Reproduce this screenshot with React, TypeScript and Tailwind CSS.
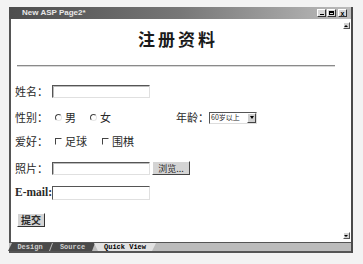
import React from "react";

const cjk = "font-['Noto_Sans_CJK_SC','Noto_Sans',sans-serif]";

function Radio() {
  return (
    <span className="inline-block w-[7px] h-[7px] rounded-full border border-t-[#444] border-l-[#444] border-r-[#e6e6e6] border-b-[#e6e6e6] mr-[3px]" />
  );
}

function Check() {
  return (
    <span className="inline-block w-[7px] h-[7px] border border-t-[#444] border-l-[#444] border-r-white border-b-white mr-[3px]" />
  );
}

function TextInput({ w }: { w: string }) {
  return (
    <div
      className={`${w} h-[13px] bg-white border border-t-[#555] border-l-[#555] border-r-[#e0e0e0] border-b-[#e0e0e0] shadow-[inset_1px_1px_0_#bbb]`}
    />
  );
}

export default function App() {
  return (
    <div className="w-[363px] h-[264px] bg-[#f3f3f3] overflow-hidden">
      <div className="ml-[9px] mt-[7px] w-[344px] h-[246px] flex flex-col border-r-2 border-[#4a4a4a]">
        {/* title bar */}
        <div className="h-[12px] flex items-center bg-gradient-to-r from-[#4d4d4d] via-[#777] to-[#bdbdbd] pl-[13px] pr-[4px]">
          <span className="text-[8px] leading-none font-bold text-[#e8e8e8] font-['Liberation_Sans',sans-serif]">
            New ASP Page2*
          </span>
          <div className="ml-auto flex gap-[1px]">
            <div className="w-[9px] h-[8px] bg-[#d8d8d8] border border-t-white border-l-white border-r-[#333] border-b-[#333] flex items-end justify-center pb-[1px]">
              <div className="w-[4px] h-[1px] bg-black" />
            </div>
            <div className="w-[9px] h-[8px] bg-[#d8d8d8] border border-t-white border-l-white border-r-[#333] border-b-[#333] flex items-center justify-center">
              <div className="w-[5px] h-[4px] border border-black border-t-2" />
            </div>
            <div className="w-[9px] h-[8px] ml-[1px] bg-[#d8d8d8] border border-t-white border-l-white border-r-[#333] border-b-[#333] flex items-center justify-center text-[7px] leading-none font-bold font-['Liberation_Sans',sans-serif]">
              x
            </div>
          </div>
        </div>
        {/* body */}
        <div className="flex-1 flex bg-white">
          <div className="flex-1 border-l-2 border-[#555] flex flex-col pl-[4px] text-[#2a2a2a]">
            <div className={`mt-[10px] text-center text-[17px] leading-[20px] font-bold tracking-[3px] text-[#1a1a1a] ${cjk}`}>
              注册资料
            </div>
            <div className="mt-[16px] ml-[2px] w-[318px] h-[2px] border-t border-[#8a8a8a] border-b border-b-[#d8d8d8]" />

            {/* 姓名 */}
            <div className={`mt-[18px] h-[13px] flex items-center text-[11px] ${cjk}`}>
              <span className="w-[37px]">姓名：</span>
              <TextInput w="w-[98px]" />
            </div>

            {/* 性别 / 年龄 */}
            <div className={`mt-[13px] h-[13px] flex items-center text-[11px] ${cjk}`}>
              <span className="w-[40px]">性别：</span>
              <Radio />
              <span className="w-[25px]">男</span>
              <Radio />
              <span className="w-[76px]">女</span>
              <span className="w-[33px]">年龄：</span>
              <div className="w-[48px] h-[12px] flex items-center bg-white border border-t-[#555] border-l-[#555] border-r-[#ddd] border-b-[#ddd]">
                <span className="flex-1 whitespace-nowrap text-[7px] leading-none pl-[1px]">60岁以上</span>
                <div className="w-[9px] h-[10px] shrink-0 bg-[#d0d0d0] border border-t-white border-l-white border-r-[#444] border-b-[#444] flex items-center justify-center">
                  <div className="w-0 h-0 border-l-[2px] border-r-[2px] border-t-[3px] border-l-transparent border-r-transparent border-t-black" />
                </div>
              </div>
            </div>

            {/* 爱好 */}
            <div className={`mt-[11px] h-[13px] flex items-center text-[11px] ${cjk}`}>
              <span className="w-[40px]">爱好：</span>
              <Check />
              <span className="w-[37px]">足球</span>
              <Check />
              <span>围棋</span>
            </div>

            {/* 照片 */}
            <div className={`mt-[13px] h-[14px] flex items-center text-[11px] ${cjk}`}>
              <span className="w-[37px]">照片：</span>
              <TextInput w="w-[98px]" />
              <div className="ml-[2px] w-[38px] h-[14px] bg-[#d4d4d4] border border-t-white border-l-white border-r-[#444] border-b-[#444] flex items-center justify-center text-[9px] leading-none">
                浏览...
              </div>
            </div>

            {/* E-mail */}
            <div className="mt-[11px] h-[14px] flex items-center">
              <span className="text-[11.5px] font-bold font-['Liberation_Serif',serif] text-[#2a2a2a]">E-mail:</span>
              <div className="w-[98px] h-[14px] bg-white border border-t-[#555] border-l-[#555] border-r-[#e0e0e0] border-b-[#e0e0e0]" />
            </div>

            {/* 提交 */}
            <div className="mt-[13px]">
              <div className={`w-[28px] h-[14px] ml-[2px] bg-[#d4d4d4] border border-t-white border-l-white border-r-[#333] border-b-[#333] flex items-center justify-center text-[10px] leading-none font-bold ${cjk}`}>
                提交
              </div>
            </div>
          </div>
          {/* scrollbar */}
          <div className="w-[10px] flex flex-col justify-between items-center py-[3px] bg-white">
            <div className="w-[7px] h-[7px] bg-[#d4d4d4] border border-t-white border-l-white border-r-[#555] border-b-[#555] flex items-center justify-center">
              <div className="w-0 h-0 border-l-[2px] border-r-[2px] border-b-[2px] border-l-transparent border-r-transparent border-b-black" />
            </div>
            <div className="w-[7px] h-[7px] bg-[#d4d4d4] border border-t-white border-l-white border-r-[#555] border-b-[#555] flex items-center justify-center">
              <div className="w-0 h-0 border-l-[2px] border-r-[2px] border-t-[2px] border-l-transparent border-r-transparent border-t-black" />
            </div>
          </div>
        </div>
        {/* tabs bar */}
        <div className="h-[11px] bg-[#bcbcbc] border-t border-[#555] border-b-2 border-b-[#555] flex items-stretch font-['Liberation_Mono',monospace] text-[7px] leading-none font-bold">
          <div className="w-[44px] bg-[#4a4a4a] text-[#cfcfcf] flex items-center justify-center [clip-path:polygon(4px_0,100%_0,calc(100%-3px)_100%,0_100%)] -ml-[1px]">
            Design
          </div>
          <div className="w-[45px] -ml-[2px] bg-[#4a4a4a] text-[#cfcfcf] flex items-center justify-center [clip-path:polygon(3px_0,100%_0,calc(100%-3px)_100%,0_100%)]">
            Source
          </div>
          <div className="w-[62px] -ml-[1px] bg-[#e2e2e2] text-black flex items-center justify-center [clip-path:polygon(0_0,100%_0,calc(100%-4px)_100%,4px_100%)]">
            Quick View
          </div>
        </div>
      </div>
    </div>
  );
}
